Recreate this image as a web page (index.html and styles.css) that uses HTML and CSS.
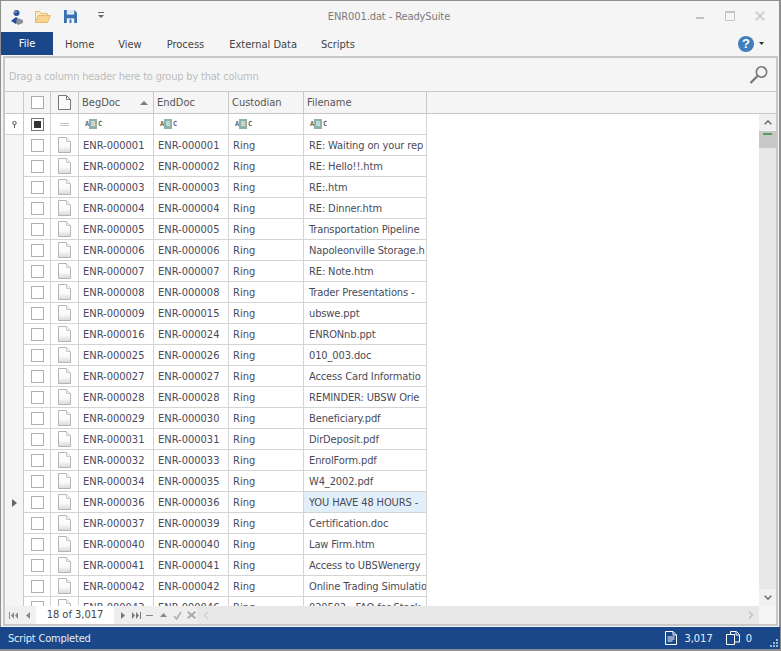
FILE: index.html
```html
<!DOCTYPE html>
<html lang="en">
<head>
<meta charset="utf-8">
<title>ENR001.dat - ReadySuite</title>
<link rel="stylesheet" href="styles.css">
</head>
<body>
<svg class="defs" width="0" height="0">
  <symbol id="doc" viewBox="0 0 13 16"><defs><linearGradient id="dg" x1="0" y1="0" x2="0" y2="1"><stop offset="0" stop-color="#fff"/><stop offset="0.6" stop-color="#fafafa"/><stop offset="1" stop-color="#d8d8d8"/></linearGradient></defs><path d="M.5.500H8.500L12.500 4.500V15.500H.5Z" fill="url(#dg)" stroke="#b5b5b5"/><path d="M8.500.500V4.500H12.500" fill="#f2f2f2" stroke="#c8c8c8"/></symbol>
</svg>
<div class="window">
  <header class="titlebar">
    <div class="qat">
      <svg class="qi" width="18" height="18" viewBox="0 0 18 18"><circle cx="8.500" cy="5" r="3" fill="#2f5597"/><path d="M3 13l5-4 4 3-4 4z" fill="#1f4e9a"/><path d="M9 10l6 2v3l-5 2-2-2z" fill="#8a8f96"/><path d="M6 4h3" stroke="#9db4d6"/></svg>
      <svg class="qi q2" width="18" height="14" viewBox="0 0 18 14"><path d="M1.500 12.500V1.500H6l1.500 2h6v2" fill="#fbe6bf" stroke="#e8b970"/><path d="M1.500 12.500l3-7h12l-3 7z" fill="#f8d48d" stroke="#e8b970"/></svg>
      <svg class="qi q3" width="13" height="13" viewBox="0 0 14 14"><path d="M0 0H11L14 3V14H0Z" fill="#3a6fb0"/><rect x="3" y="0" width="8" height="5" fill="#dce7f3"/><rect x="3" y="9" width="8" height="5" fill="#f3f6fa"/><rect x="6" y="10" width="2" height="4" fill="#3a6fb0"/></svg>
      <svg class="qi q4" width="7" height="7" viewBox="0 0 7 7"><rect y="0" width="6" height="1" fill="#666"/><path d="M0 3h6L3 6z" fill="#666"/></svg>
    </div>
    <div class="doc-title">ENR001.dat - ReadySuite</div>
    <div class="winbtns">
      <svg class="wmin" width="9" height="2" viewBox="0 0 9 2"><rect width="8" height="2" fill="#c4c4c4"/></svg>
      <svg class="wmax" width="10" height="10" viewBox="0 0 10 10"><path d="M.5.500h9v9h-9z" fill="none" stroke="#c4c4c4"/><rect width="10" height="2" fill="#c4c4c4"/></svg>
      <svg class="wclose" width="10" height="10" viewBox="0 0 10 10"><path d="M.7.700l8.600 8.600M9.300.700L.7 9.300" stroke="#c4c4c4" stroke-width="1.600"/></svg>
    </div>
  </header>
  <nav class="tabs">
    <div class="tab-file">File</div>
    <div class="tab t-home">Home</div>
    <div class="tab t-view">View</div>
    <div class="tab t-process">Process</div>
    <div class="tab t-ext">External Data</div>
    <div class="tab t-scripts">Scripts</div>
    <div class="help"><span class="help-q">?</span><svg width="5" height="3" viewBox="0 0 5 3"><path d="M0 0h5L2.500 3z" fill="#333"/></svg></div>
  </nav>
  <main class="frame">
    <div class="group-panel">
      <span class="group-text">Drag a column header here to group by that column</span>
      <svg width="20" height="20" viewBox="0 0 20 20"><circle cx="12.500" cy="7" r="5.200" fill="none" stroke="#757575" stroke-width="1.600"/><path d="M8.500 11l-7 7" stroke="#757575" stroke-width="2.200"/></svg>
    </div>
    <div class="grid-head row-grid">
      <div class="hc"></div>
      <div class="hc ctr"><span class="cb cb-head"></span></div>
      <div class="hc ctr"><svg width="13" height="15" viewBox="0 0 13 15"><path d="M.5.500H8.500L12.500 4.500V14.500H.5Z" fill="#fafafa" stroke="#777"/><path d="M8.500.500V4.500H12.500" fill="none" stroke="#777"/></svg></div>
      <div class="hc txt sort">BegDoc<svg width="8" height="4" viewBox="0 0 8 4"><path d="M0 4L4 0l4 4z" fill="#7a7a7a"/></svg></div>
      <div class="hc txt">EndDoc</div>
      <div class="hc txt">Custodian</div>
      <div class="hc txt">Filename</div>
    </div>
    <div class="mid">
      <div class="rows">
        <div class="row row-grid filter">
          <div class="ind ctr"><svg width="5" height="7" viewBox="0 0 5 7"><circle cx="2.500" cy="2" r="1.700" fill="none" stroke="#555"/><path d="M2.500 3.500V7" stroke="#555"/></svg></div>
          <div class="c ctr"><span class="cb cb-full"><i></i></span></div>
          <div class="c ctr"><span class="eq"></span></div>
          <div class="c abc"><span>A</span><b>B</b><span>C</span></div>
          <div class="c abc"><span>A</span><b>B</b><span>C</span></div>
          <div class="c abc"><span>A</span><b>B</b><span>C</span></div>
          <div class="c abc"><span>A</span><b>B</b><span>C</span></div>
        </div>
        <div class="row row-grid"><div class="ind"></div><div class="c ctr"><span class="cb"></span></div><div class="c ctr"><svg class="d"><use href="#doc"/></svg></div><div class="c t">ENR-000001</div><div class="c t">ENR-000001</div><div class="c t">Ring</div><div class="c t fn">RE: Waiting on your rep</div></div>
        <div class="row row-grid"><div class="ind"></div><div class="c ctr"><span class="cb"></span></div><div class="c ctr"><svg class="d"><use href="#doc"/></svg></div><div class="c t">ENR-000002</div><div class="c t">ENR-000002</div><div class="c t">Ring</div><div class="c t fn">RE: Hello!!.htm</div></div>
        <div class="row row-grid"><div class="ind"></div><div class="c ctr"><span class="cb"></span></div><div class="c ctr"><svg class="d"><use href="#doc"/></svg></div><div class="c t">ENR-000003</div><div class="c t">ENR-000003</div><div class="c t">Ring</div><div class="c t fn">RE:.htm</div></div>
        <div class="row row-grid"><div class="ind"></div><div class="c ctr"><span class="cb"></span></div><div class="c ctr"><svg class="d"><use href="#doc"/></svg></div><div class="c t">ENR-000004</div><div class="c t">ENR-000004</div><div class="c t">Ring</div><div class="c t fn">RE: Dinner.htm</div></div>
        <div class="row row-grid"><div class="ind"></div><div class="c ctr"><span class="cb"></span></div><div class="c ctr"><svg class="d"><use href="#doc"/></svg></div><div class="c t">ENR-000005</div><div class="c t">ENR-000005</div><div class="c t">Ring</div><div class="c t fn">Transportation Pipeline</div></div>
        <div class="row row-grid"><div class="ind"></div><div class="c ctr"><span class="cb"></span></div><div class="c ctr"><svg class="d"><use href="#doc"/></svg></div><div class="c t">ENR-000006</div><div class="c t">ENR-000006</div><div class="c t">Ring</div><div class="c t fn">Napoleonville Storage.h</div></div>
        <div class="row row-grid"><div class="ind"></div><div class="c ctr"><span class="cb"></span></div><div class="c ctr"><svg class="d"><use href="#doc"/></svg></div><div class="c t">ENR-000007</div><div class="c t">ENR-000007</div><div class="c t">Ring</div><div class="c t fn">RE: Note.htm</div></div>
        <div class="row row-grid"><div class="ind"></div><div class="c ctr"><span class="cb"></span></div><div class="c ctr"><svg class="d"><use href="#doc"/></svg></div><div class="c t">ENR-000008</div><div class="c t">ENR-000008</div><div class="c t">Ring</div><div class="c t fn">Trader Presentations -</div></div>
        <div class="row row-grid"><div class="ind"></div><div class="c ctr"><span class="cb"></span></div><div class="c ctr"><svg class="d"><use href="#doc"/></svg></div><div class="c t">ENR-000009</div><div class="c t">ENR-000015</div><div class="c t">Ring</div><div class="c t fn">ubswe.ppt</div></div>
        <div class="row row-grid"><div class="ind"></div><div class="c ctr"><span class="cb"></span></div><div class="c ctr"><svg class="d"><use href="#doc"/></svg></div><div class="c t">ENR-000016</div><div class="c t">ENR-000024</div><div class="c t">Ring</div><div class="c t fn">ENRONnb.ppt</div></div>
        <div class="row row-grid"><div class="ind"></div><div class="c ctr"><span class="cb"></span></div><div class="c ctr"><svg class="d"><use href="#doc"/></svg></div><div class="c t">ENR-000025</div><div class="c t">ENR-000026</div><div class="c t">Ring</div><div class="c t fn">010_003.doc</div></div>
        <div class="row row-grid"><div class="ind"></div><div class="c ctr"><span class="cb"></span></div><div class="c ctr"><svg class="d"><use href="#doc"/></svg></div><div class="c t">ENR-000027</div><div class="c t">ENR-000027</div><div class="c t">Ring</div><div class="c t fn">Access Card Informatio</div></div>
        <div class="row row-grid"><div class="ind"></div><div class="c ctr"><span class="cb"></span></div><div class="c ctr"><svg class="d"><use href="#doc"/></svg></div><div class="c t">ENR-000028</div><div class="c t">ENR-000028</div><div class="c t">Ring</div><div class="c t fn">REMINDER: UBSW Orie</div></div>
        <div class="row row-grid"><div class="ind"></div><div class="c ctr"><span class="cb"></span></div><div class="c ctr"><svg class="d"><use href="#doc"/></svg></div><div class="c t">ENR-000029</div><div class="c t">ENR-000030</div><div class="c t">Ring</div><div class="c t fn">Beneficiary.pdf</div></div>
        <div class="row row-grid"><div class="ind"></div><div class="c ctr"><span class="cb"></span></div><div class="c ctr"><svg class="d"><use href="#doc"/></svg></div><div class="c t">ENR-000031</div><div class="c t">ENR-000031</div><div class="c t">Ring</div><div class="c t fn">DirDeposit.pdf</div></div>
        <div class="row row-grid"><div class="ind"></div><div class="c ctr"><span class="cb"></span></div><div class="c ctr"><svg class="d"><use href="#doc"/></svg></div><div class="c t">ENR-000032</div><div class="c t">ENR-000033</div><div class="c t">Ring</div><div class="c t fn">EnrolForm.pdf</div></div>
        <div class="row row-grid"><div class="ind"></div><div class="c ctr"><span class="cb"></span></div><div class="c ctr"><svg class="d"><use href="#doc"/></svg></div><div class="c t">ENR-000034</div><div class="c t">ENR-000035</div><div class="c t">Ring</div><div class="c t fn">W4_2002.pdf</div></div>
        <div class="row row-grid"><div class="ind ctr"><svg width="5" height="8" viewBox="0 0 5 8"><path d="M0 0l5 4-5 4z" fill="#666"/></svg></div><div class="c ctr"><span class="cb"></span></div><div class="c ctr"><svg class="d"><use href="#doc"/></svg></div><div class="c t">ENR-000036</div><div class="c t">ENR-000036</div><div class="c t">Ring</div><div class="c t fn sel">YOU HAVE 48 HOURS -</div></div>
        <div class="row row-grid"><div class="ind"></div><div class="c ctr"><span class="cb"></span></div><div class="c ctr"><svg class="d"><use href="#doc"/></svg></div><div class="c t">ENR-000037</div><div class="c t">ENR-000039</div><div class="c t">Ring</div><div class="c t fn">Certification.doc</div></div>
        <div class="row row-grid"><div class="ind"></div><div class="c ctr"><span class="cb"></span></div><div class="c ctr"><svg class="d"><use href="#doc"/></svg></div><div class="c t">ENR-000040</div><div class="c t">ENR-000040</div><div class="c t">Ring</div><div class="c t fn">Law Firm.htm</div></div>
        <div class="row row-grid"><div class="ind"></div><div class="c ctr"><span class="cb"></span></div><div class="c ctr"><svg class="d"><use href="#doc"/></svg></div><div class="c t">ENR-000041</div><div class="c t">ENR-000041</div><div class="c t">Ring</div><div class="c t fn">Access to UBSWenergy</div></div>
        <div class="row row-grid"><div class="ind"></div><div class="c ctr"><span class="cb"></span></div><div class="c ctr"><svg class="d"><use href="#doc"/></svg></div><div class="c t">ENR-000042</div><div class="c t">ENR-000042</div><div class="c t">Ring</div><div class="c t fn">Online Trading Simulatio</div></div>
        <div class="row row-grid"><div class="ind"></div><div class="c ctr"><span class="cb"></span></div><div class="c ctr"><svg class="d"><use href="#doc"/></svg></div><div class="c t">ENR-000043</div><div class="c t">ENR-000046</div><div class="c t">Ring</div><div class="c t fn">020502 - FAQ for Stock</div></div>
      </div>
      <div class="vscroll">
        <div class="sb-btn"><svg width="8" height="5" viewBox="0 0 8 5"><path d="M.7 4.300L4 1l3.300 3.300" fill="none" stroke="#6e6e6e" stroke-width="1.600"/></svg></div>
        <div class="thumb"><span class="mark"></span></div>
        <div class="track"></div>
        <div class="sb-btn"><svg width="8" height="5" viewBox="0 0 8 5"><path d="M.7.700L4 4l3.300-3.300" fill="none" stroke="#6e6e6e" stroke-width="1.600"/></svg></div>
      </div>
    </div>
    <div class="pager">
      <div class="nav">
        <svg class="pi" width="9" height="7" viewBox="0 0 9 7"><path d="M0 0h1v7H0zM5 0v7L2 3.500zM9 0v7L6 3.500z" fill="#888"/></svg>
        <svg class="pi p2" width="4" height="7" viewBox="0 0 4 7"><path d="M4 0v7L0 3.500z" fill="#888"/></svg>
      </div>
      <div class="count">18 of 3,017</div>
      <div class="nav nav-r">
        <svg class="pi" width="4" height="7" viewBox="0 0 4 7"><path d="M0 0v7l4-3.500z" fill="#777"/></svg>
        <svg class="pi p4" width="9" height="7" viewBox="0 0 9 7"><path d="M0 0v7l3-3.500zM4 0v7l3-3.500zM8 0h1v7H8z" fill="#777"/></svg>
        <svg class="pi p5" width="7" height="1" viewBox="0 0 7 1"><rect width="7" height="1" fill="#888"/></svg>
        <svg class="pi p6" width="7" height="4" viewBox="0 0 7 4"><path d="M0 4l3.500-4L7 4z" fill="#888"/></svg>
        <svg class="pi p7" width="9" height="9" viewBox="0 0 9 9"><path d="M1 5l2.500 3L8 1" fill="none" stroke="#b3b3b3" stroke-width="1.800"/></svg>
        <svg class="pi p8" width="9" height="8" viewBox="0 0 9 8"><path d="M.7.700l7.600 6.600M8.300.700L.7 7.300" stroke="#a9a9a9" stroke-width="1.800"/></svg>
        <svg class="pi p9" width="6" height="9" viewBox="0 0 6 9"><path d="M5 1L1.500 4.500 5 8" fill="none" stroke="#d2d2d2" stroke-width="1.500"/></svg>
      </div>
      <div class="hscroll"><svg width="6" height="8" viewBox="0 0 6 8"><path d="M1 .7L4.500 4 1 7.300" fill="none" stroke="#c6c6c6" stroke-width="1.600"/></svg></div>
      <div class="corner"></div>
    </div>
  </main>
  <footer class="status">
    <span class="status-text">Script Completed</span>
    <div class="stats">
      <svg width="12" height="14" viewBox="0 0 12 14"><path d="M.5.500H8L11.500 4V13.500H.5Z" fill="none" stroke="#fff"/><path d="M2.500 6h7M2.500 8h7M2.500 10h5" stroke="#fff"/><path d="M8 .500V4H11.500" fill="none" stroke="#fff"/></svg>
      <span class="stat1">3,017</span>
      <svg class="s2" width="14" height="14" viewBox="0 0 14 14"><path d="M.5 3.500H8.500V13.500H.5Z" fill="none" stroke="#fff"/><path d="M4.500 3V.500H10.500L13.500 3.500V11H9" fill="none" stroke="#fff"/><path d="M10 1V4H13" fill="none" stroke="#fff"/></svg>
      <span class="stat2">0</span>
      <svg class="grip" width="8" height="8" viewBox="0 0 8 8"><path d="M6 0h2v2H6zM3 3h2v2H3zM6 3h2v2H6zM0 6h2v2H0zM3 6h2v2H3zM6 6h2v2H6z" fill="#9fb4d2"/></svg>
    </div>
  </footer>
</div>
</body>
</html>
```

FILE: styles.css
```css
* { box-sizing: border-box; }
html, body { margin: 0; padding: 0; }
body { width: 781px; height: 651px; overflow: hidden; background: #f5f5f5; font-family: "DejaVu Sans Condensed", "DejaVu Sans", sans-serif; font-size: 11px; color: #444; }
.defs { display: block; height: 0; }
svg { display: block; flex: none; }
.window { width: 781px; height: 651px; display: flex; flex-direction: column; border: 1px solid #8f8f8f; border-bottom-width: 2px; border-right-width: 2px; background: #f5f5f5; }
.titlebar { height: 31px; display: flex; align-items: center; position: relative; flex: none; }
.qat { display: flex; align-items: center; padding-left: 7px; }
.q2 { margin-left: 8px; }
.q3 { margin-left: 12px; }
.q4 { margin-left: 21px; margin-top: -2px; }
.doc-title { position: absolute; left: 0; right: 0; top: 9px; text-align: center; color: #7a7a7a; font-size: 11px; letter-spacing: -0.1px; padding-right: 2px; }
.winbtns { margin-left: auto; display: flex; align-items: flex-start; align-self: flex-start; padding: 10px 14px 0 0; }
.wmin { margin-top: 6px; }
.wmax { margin-left: 20px; }
.wclose { margin-left: 20px; }
.tabs { height: 23px; display: flex; align-items: center; flex: none; }
.tab-file { width: 52px; height: 23px; background: #19478a; color: #fff; display: flex; align-items: center; justify-content: center; }
.tab { color: #444; padding-top: 2px; }
.t-home { margin-left: 12px; }
.t-view { margin-left: 24px; }
.t-process { margin-left: 25px; }
.t-ext { margin-left: 25px; }
.t-scripts { margin-left: 24px; }
.help { margin-left: auto; display: flex; align-items: center; padding-right: 15px; gap: 5px; }
.help-q { width: 16px; height: 16px; border-radius: 50%; background: #3f7fbf; color: #fff; font: bold 13px/16px "Liberation Sans", sans-serif; text-align: center; }
.frame { flex: 1; min-height: 0; display: flex; flex-direction: column; margin: 1px 1px 1px 2px; border: 2px solid #c8c8c8; background: #f5f5f5; overflow: hidden; }
.group-panel { height: 34px; flex: none; display: flex; align-items: center; justify-content: space-between; padding: 0 7px 0 4px; border-bottom: 1px solid #c8c8c8; color: #bdbdbd; }
.group-text { letter-spacing: -0.2px; padding-top: 3px; }
.row-grid { display: grid; grid-template-columns: 19px 27px 28px 75px 75px 75px 123px; }
.grid-head { height: 22px; flex: none; border-bottom: 1px solid #c8c8c8; }
.hc { border-right: 1px solid #c8c8c8; display: flex; align-items: center; color: #555; }
.ctr { justify-content: center; align-items: center; display: flex; }
.txt { padding-left: 3px; }
.sort { justify-content: space-between; padding-right: 5px; }
.mid { flex: 1; min-height: 0; display: flex; }
.rows { flex: 1; min-width: 0; background: #fff; overflow: hidden; }
.row { height: 21px; width: 422px; }
.ind { background: #f5f5f5; border-right: 1px solid #c8c8c8; }
.filter .ind { background: #fff; border-bottom: 1px solid #d4d4d4; }
.c { border-right: 1px solid #d4d4d4; border-bottom: 1px solid #d4d4d4; }
.t { padding: 3px 0 0 4px; white-space: nowrap; overflow: hidden; line-height: 16px; color: #4a4a5a; }
.fn { padding-left: 5px; letter-spacing: -0.12px; }
.sel { background: #e3eff8; }
.cb { display: block; width: 13px; height: 13px; background: #fff; border: 1px solid #b0b0b0; }
.cb-head { border-color: #aaa; }
.cb-full { border-color: #777; padding: 2px; }
.cb-full i { display: block; width: 7px; height: 7px; background: #333; }
.eq { display: block; width: 9px; height: 3px; border-top: 1px solid #c4c4c4; border-bottom: 1px solid #c4c4c4; }
.d { width: 13px; height: 16px; }
.abc { display: flex; align-items: center; padding-left: 6px; font: bold 7px/10px "DejaVu Sans Mono", monospace; color: #666; }
.abc span { width: 4px; text-align: center; }
.abc b { width: 8px; height: 10px; background: #8fb0a8; color: #dfe9e6; line-height: 10px; text-align: center; margin-right: 1px; }
.vscroll { width: 17px; flex: none; display: flex; flex-direction: column; background: #e8e8e8; }
.sb-btn { height: 17px; display: flex; align-items: center; justify-content: center; background: #f0f0f0; }
.thumb { height: 17px; background: #c8c8c8; padding-top: 2px; }
.mark { display: block; width: 9px; height: 2px; margin-left: 4px; background: #4e9e5e; }
.track { flex: 1; }
.pager { height: 18px; flex: none; display: flex; align-items: center; background: #e8e8e8; }
.nav { width: 31px; display: flex; align-items: center; padding-left: 4px; height: 18px; background: #f0f0f0; }
.p2 { margin-left: 8px; }
.count { width: 78px; height: 18px; background: #fff; line-height: 17px; text-align: center; color: #444; }
.nav-r { width: 83px; padding-left: 7px; background: #eee; }
.p4 { margin-left: 7px; } .p5 { margin-left: 5px; } .p6 { margin-left: 7px; } .p7 { margin-left: 6px; } .p8 { margin-left: 5px; } .p9 { margin-left: 7px; }
.hscroll { flex: 1; height: 18px; display: flex; align-items: center; justify-content: flex-end; padding-right: 5px; }
.corner { width: 17px; height: 18px; background: #f5f5f5; }
.status { height: 22px; flex: none; background: #19478a; color: #e8eef6; display: flex; align-items: center; justify-content: space-between; padding-left: 8px; position: relative; margin-left: -1px; margin-right: -1px; }
.status-text { letter-spacing: -0.2px; }
.stats { display: flex; align-items: center; padding-right: 8px; }
.stat1 { margin-left: 7px; } .s2 { margin-left: 13px; } .stat2 { margin-left: 6px; padding-right: 20px; }
.grip { position: absolute; right: 2px; bottom: 2px; }
```
